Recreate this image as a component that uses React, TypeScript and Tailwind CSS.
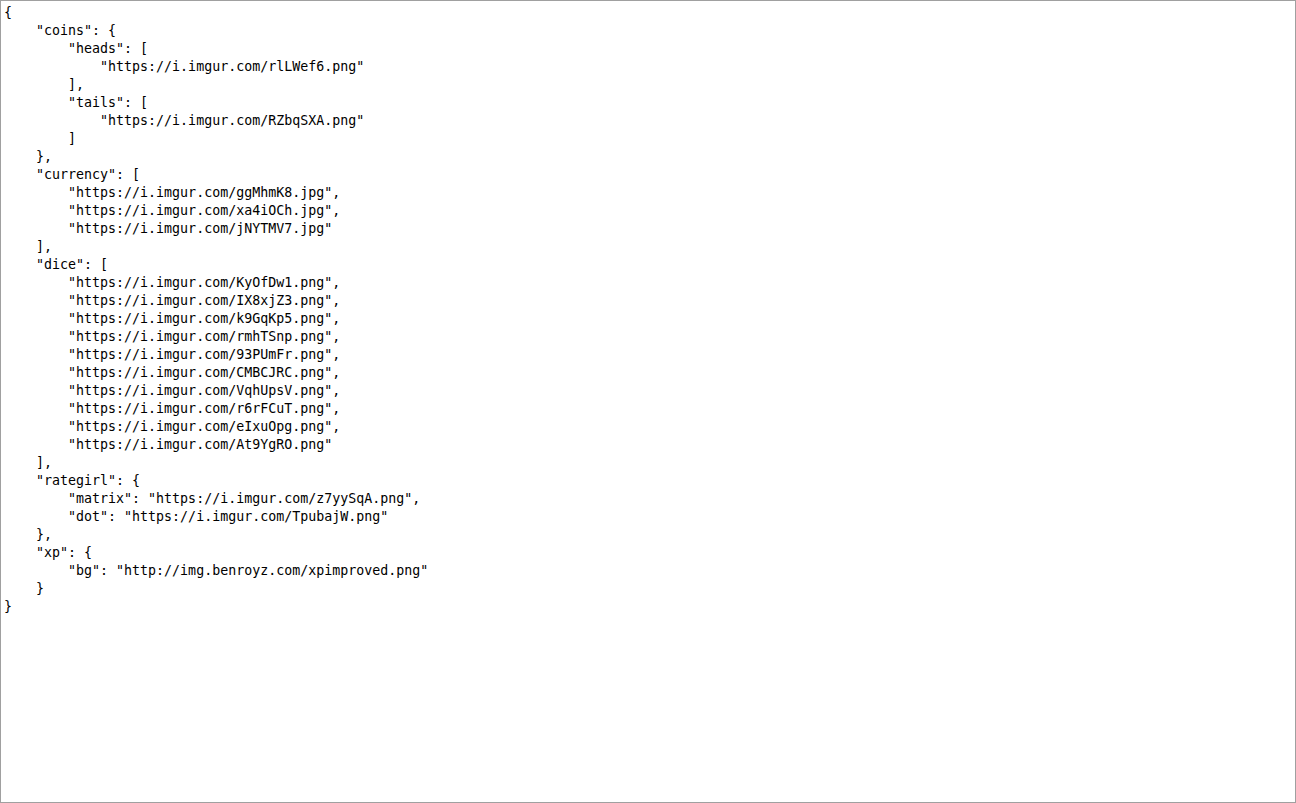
const json = `{
    "coins": {
        "heads": [
            "https://i.imgur.com/rlLWef6.png"
        ],
        "tails": [
            "https://i.imgur.com/RZbqSXA.png"
        ]
    },
    "currency": [
        "https://i.imgur.com/ggMhmK8.jpg",
        "https://i.imgur.com/xa4iOCh.jpg",
        "https://i.imgur.com/jNYTMV7.jpg"
    ],
    "dice": [
        "https://i.imgur.com/KyOfDw1.png",
        "https://i.imgur.com/IX8xjZ3.png",
        "https://i.imgur.com/k9GqKp5.png",
        "https://i.imgur.com/rmhTSnp.png",
        "https://i.imgur.com/93PUmFr.png",
        "https://i.imgur.com/CMBCJRC.png",
        "https://i.imgur.com/VqhUpsV.png",
        "https://i.imgur.com/r6rFCuT.png",
        "https://i.imgur.com/eIxuOpg.png",
        "https://i.imgur.com/At9YgRO.png"
    ],
    "rategirl": {
        "matrix": "https://i.imgur.com/z7yySqA.png",
        "dot": "https://i.imgur.com/TpubajW.png"
    },
    "xp": {
        "bg": "http://img.benroyz.com/xpimproved.png"
    }
}`

export default function App() {
  return (
    <div className="h-[803px] w-full border border-[#a0a0a0] bg-white">
      <pre className="pl-[3px] pt-[3px] font-['DejaVu_Sans_Mono',monospace] text-[13.3px] leading-[18px] text-black">
        {json}
      </pre>
    </div>
  )
}
